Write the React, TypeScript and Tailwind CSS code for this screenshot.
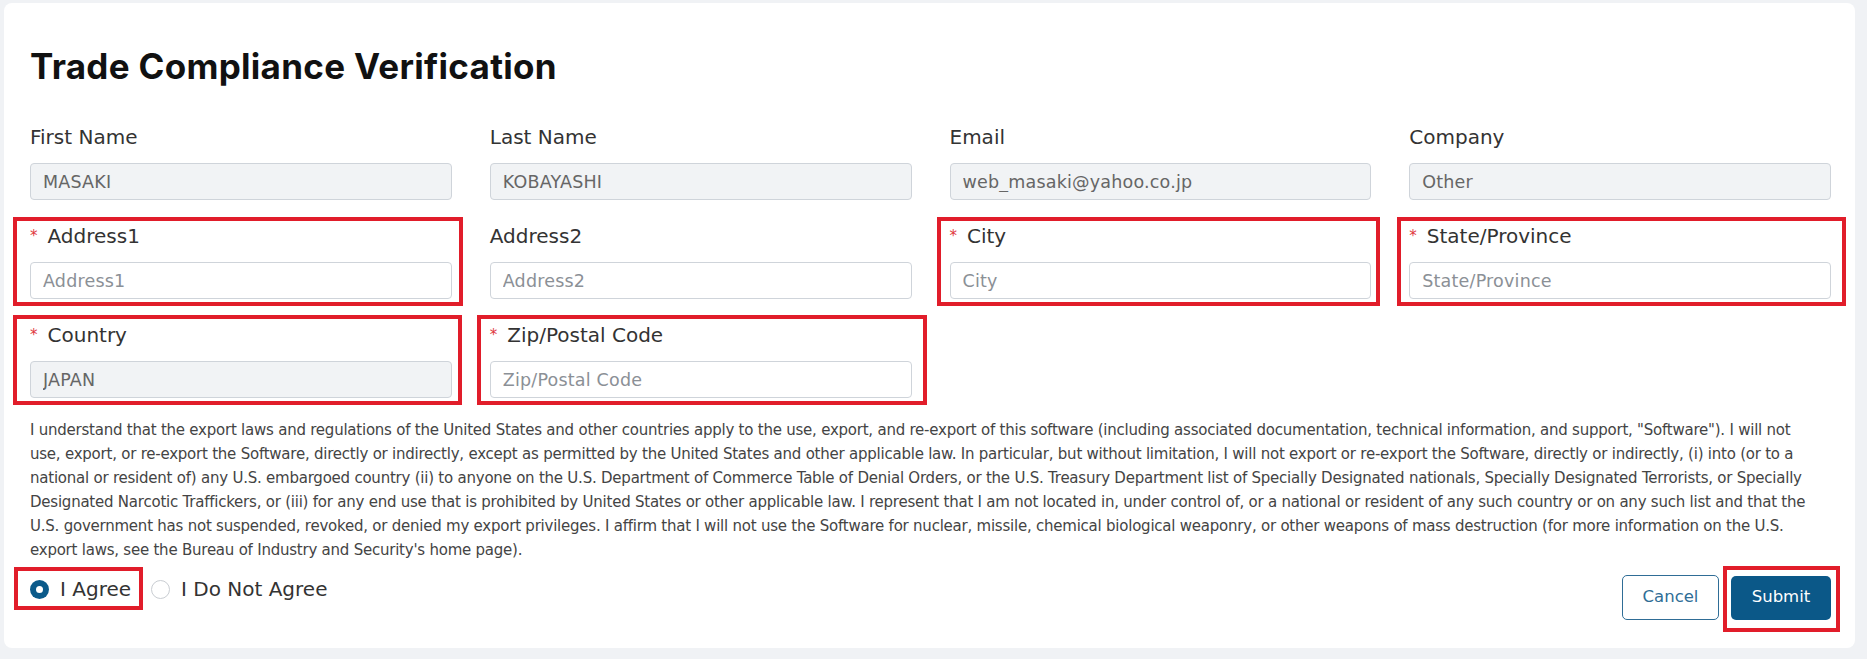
import React from "react"

const body = { fontFamily: '"DejaVu Sans", Verdana, sans-serif' }

type FieldProps = {
  label: string
  value?: string
  placeholder?: string
  required?: boolean
  disabled?: boolean
  mark?: string
}

function Field({ label, value, placeholder, required, disabled, mark }: FieldProps) {
  return (
    <div className="relative flex flex-col">
      <label className="text-[20px] leading-[24px] text-[#333]">
        {required && <span className="text-[#e0393e] text-[15px] align-top mr-[10px]">*</span>}
        {label}
      </label>
      <input
        readOnly
        disabled={disabled}
        defaultValue={value}
        placeholder={placeholder}
        className={
          disabled
            ? "mt-[14px] h-[37px] w-full rounded-[4px] border border-[#cfd4da] bg-[#f1f3f5] px-[12px] text-[17.5px] tracking-[0.2px] text-[#666] outline-none"
            : "mt-[14px] h-[37px] w-full rounded-[4px] border border-[#cfd4da] bg-white px-[12px] text-[17.5px] tracking-[0.2px] text-[#666] outline-none placeholder:text-[#8b9096]"
        }
        style={body}
      />
      {mark && <div className={"pointer-events-none absolute border-4 border-[#e11d2a] " + mark} />}
    </div>
  )
}

export default function App() {
  return (
    <div className="min-h-screen bg-[#f0f2f5] pt-[3px] pl-[4px] pr-[12px] pb-[11px]" style={body}>
      <div className="bg-white rounded-[8px] pt-[42px] pb-[28px] pl-[26px] pr-[24px]">
        <h1
          className="text-[35px] leading-[42px] font-bold text-[#111] tracking-[0.3px]"
          style={{ fontFamily: "Inter, Lato, sans-serif" }}
        >
          Trade Compliance Verification
        </h1>

        <div className="mt-[38px] grid grid-cols-4 gap-x-[38px] gap-y-[24px]">
          <Field label="First Name" value="MASAKI" disabled />
          <Field label="Last Name" value="KOBAYASHI" disabled />
          <Field label="Email" value="web_masaki@yahoo.co.jp" disabled />
          <Field label="Company" value="Other" disabled />

          <Field label="Address1" placeholder="Address1" required mark="-left-[17px] -right-[11px] -top-[7px] -bottom-[7px]" />
          <Field label="Address2" placeholder="Address2" />
          <Field label="City" placeholder="City" required mark="-left-[13px] -right-[9px] -top-[7px] -bottom-[7px]" />
          <Field label="State/Province" placeholder="State/Province" required mark="-left-[12px] -right-[15px] -top-[7px] -bottom-[7px]" />

          <Field label="Country" value="JAPAN" required disabled mark="-left-[17px] -right-[10px] -top-[8px] -bottom-[7px]" />
          <Field label="Zip/Postal Code" placeholder="Zip/Postal Code" required mark="-left-[13px] -right-[15px] -top-[8px] -bottom-[7px]" />
        </div>

        <p className="mt-[20px] text-[15px] leading-[24px] tracking-[-0.23px] text-[#444]">
          I understand that the export laws and regulations of the United States and other countries apply to the use, export, and re-export of this software (including associated documentation, technical information, and support, "Software"). I will not
          <br />
          use, export, or re-export the Software, directly or indirectly, except as permitted by the United States and other applicable law. In particular, but without limitation, I will not export or re-export the Software, directly or indirectly, (i) into (or to a
          <br />
          national or resident of) any U.S. embargoed country (ii) to anyone on the U.S. Department of Commerce Table of Denial Orders, or the U.S. Treasury Department list of Specially Designated nationals, Specially Designated Terrorists, or Specially
          <br />
          Designated Narcotic Traffickers, or (iii) for any end use that is prohibited by United States or other applicable law. I represent that I am not located in, under control of, or a national or resident of any such country or on any such list and that the
          <br />
          U.S. government has not suspended, revoked, or denied my export privileges. I affirm that I will not use the Software for nuclear, missile, chemical biological weaponry, or other weapons of mass destruction (for more information on the U.S.
          <br />
          export laws, see the Bureau of Industry and Security's home page).
        </p>

        <div className="flex items-start justify-between">
          <div className="mt-[15px] flex items-center gap-[20px] text-[20px] leading-[24px] text-[#333]">
            <label className="relative flex items-center gap-[11px]">
              <span className="flex h-[19px] w-[19px] items-center justify-center rounded-full bg-[#0b5a8a]">
                <span className="h-[7px] w-[7px] rounded-full bg-white" />
              </span>
              I Agree
              <span className="pointer-events-none absolute -left-[16px] -right-[12px] -top-[10px] -bottom-[9px] border-4 border-[#e11d2a]" />
            </label>
            <label className="flex items-center gap-[11px]">
              <span className="h-[19px] w-[19px] rounded-full border border-[#c9cdd2] bg-white" />
              I Do Not Agree
            </label>
          </div>

          <div className="mt-[13px] flex items-center gap-[12px]">
            <button className="h-[45px] w-[97px] rounded-[5px] border border-[#2f6d96] bg-white text-[16.5px] text-[#2f6d96]">
              Cancel
            </button>
            <div className="relative">
              <button className="h-[44px] w-[100px] rounded-[5px] bg-[#0b5888] text-[16.5px] text-white">Submit</button>
              <span className="pointer-events-none absolute -left-[8px] -right-[9px] -top-[10px] -bottom-[12px] border-4 border-[#e11d2a]" />
            </div>
          </div>
        </div>
      </div>
    </div>
  )
}
